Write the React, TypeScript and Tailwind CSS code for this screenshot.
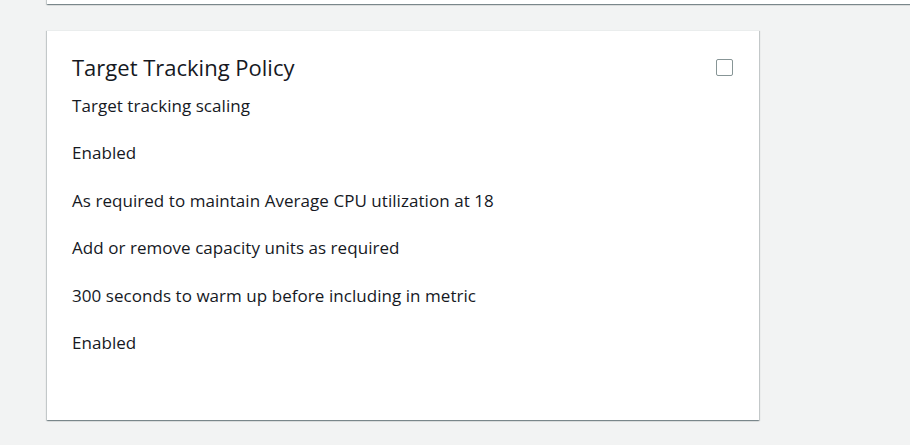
const rows = [
  'Target tracking scaling',
  'Enabled',
  'As required to maintain Average CPU utilization at 18',
  'Add or remove capacity units as required',
  '300 seconds to warm up before including in metric',
  'Enabled',
];

export default function App() {
  return (
    <div
      className="h-[445px] w-[910px] overflow-hidden bg-[#f2f3f3] text-[#16191f]"
      style={{ fontFamily: '"Open Sans", "Liberation Sans", sans-serif' }}
    >
      <div className="-mt-[40px] ml-[47px] h-[44px] w-[900px] bg-white shadow-[0_1px_1px_0_rgba(0,28,36,0.3),1px_1px_1px_0_rgba(0,28,36,0.15),-1px_1px_1px_0_rgba(0,28,36,0.15)]" />
      <div className="ml-[47px] mt-[26px] h-[390px] w-[712px] border-t border-[#eaeded] bg-white shadow-[0_1px_1px_0_rgba(0,28,36,0.3),1px_1px_1px_0_rgba(0,28,36,0.15),-1px_1px_1px_0_rgba(0,28,36,0.15)]">
        <div className="flex items-start justify-between pl-[25px] pr-[26px] pt-[22px]">
          <h2 className="text-[22px] leading-[28px]">Target Tracking Policy</h2>
          <div className="mt-[6px] h-[17px] w-[17px] rounded-[2px] border border-[#879596]" />
        </div>
        <div className="flex flex-col gap-[23.4px] pl-[25px] pt-[13px] text-[17px] tracking-[0.05px] leading-[24px]">
          {rows.map((r, i) => (
            <p key={i}>{r}</p>
          ))}
        </div>
      </div>
    </div>
  );
}
